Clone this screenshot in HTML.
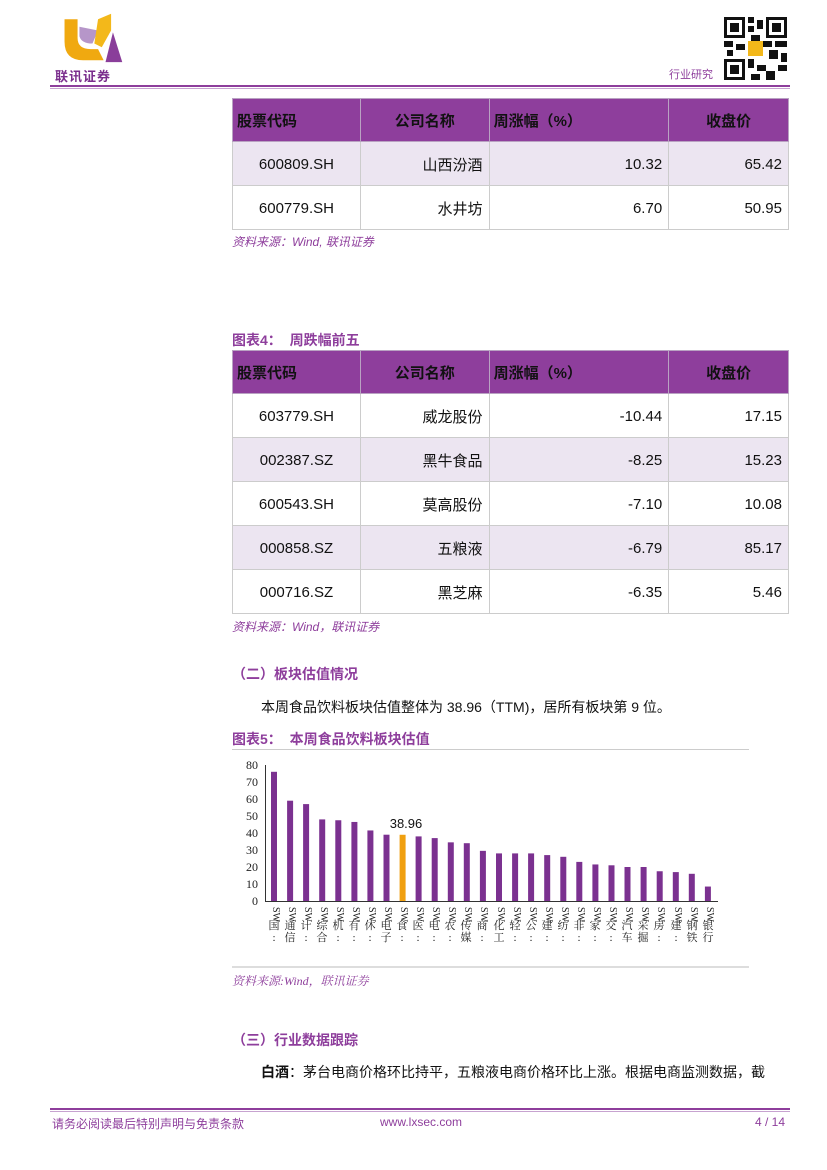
<!DOCTYPE html>
<html><head><meta charset="utf-8">
<style>
*{margin:0;padding:0;box-sizing:border-box}
body{width:827px;height:1170px;background:#fff;position:relative;font-family:"Liberation Sans","Noto Sans CJK SC",sans-serif;overflow:hidden}
.a{position:absolute}
table{position:absolute;border-collapse:collapse;left:232px;width:557px;font-size:15px;color:#111}
td{border:1px solid #ccc;height:44px;padding:2px 6px 0}
th{background:#8e3e9c;color:#111;height:43px;font-weight:bold;font-size:15px;border:1px solid #b9a2c2;padding:0 4px}
tr.l td{background:#ece5f1}
.r{text-align:right}
.c{text-align:center}
.src{font-size:12px;color:#8e3e9c;font-style:italic}
.ttl{font-size:14px;font-weight:bold;color:#8e3e9c}
.vl{position:absolute;top:906px;font-size:11px;font-family:"Liberation Serif","Noto Serif CJK SC",serif;color:#222;line-height:12px;width:12px;text-align:center}
.vl i{display:block;font-style:normal;font-size:10px;height:14px;line-height:12px;transform:rotate(90deg)}
</style></head><body>
<svg class="a" style="left:57px;top:10px" width="70" height="54" viewBox="0 0 75 58">
<path d="M8 10 L22 10 L22 30 Q22 42 36 42 L44 42 L50 54 L28 54 Q8 54 8 34 Z" fill="#f0a910"/>
<path d="M24 18 L44 22 L38 36 Q26 36 24 28 Z" fill="#b696c9"/>
<path d="M44 10 L58 4 L58 22 L48 40 L40 36 Z" fill="#f3b81a"/>
<path d="M60 24 L70 56 L52 56 Z" fill="#8a3e9a"/>
</svg>
<div class="a" style="left:55px;top:66px;font-size:13px;color:#7a2d8c;letter-spacing:1px;font-weight:bold">联讯证券</div>
<svg class="a" style="left:724px;top:17px" width="63" height="63" viewBox="0 0 21 21">
<rect width="21" height="21" fill="#fff"/>
<g fill="#111">
<rect x="0" y="0" width="7" height="7"/><rect x="14" y="0" width="7" height="7"/><rect x="0" y="14" width="7" height="7"/>
<path d="M8 0h2v2h-2zM11 1h2v3h-2zM8 3h2v2h-2zM9 6h3v2h-3zM0 8h3v2h-3zM4 9h3v2h-3zM13 8h3v2h-3zM17 8h4v2h-4zM15 11h3v3h-3zM19 12h2v3h-2zM8 14h2v3h-2zM11 16h3v2h-3zM14 18h3v3h-3zM18 16h3v2h-3zM9 19h3v2h-3zM1 11h2v2h-2z"/>
</g>
<g fill="#fff"><rect x="1" y="1" width="5" height="5"/><rect x="15" y="1" width="5" height="5"/><rect x="1" y="15" width="5" height="5"/></g>
<g fill="#111"><rect x="2" y="2" width="3" height="3"/><rect x="16" y="2" width="3" height="3"/><rect x="2" y="16" width="3" height="3"/></g>
<rect x="8" y="8" width="5" height="5" fill="#f3b81a"/>
</svg>
<div class="a" style="left:669px;top:66px;font-size:11px;color:#8e3e9c">行业研究</div>
<div class="a" style="left:50px;top:85px;width:740px;height:2px;background:#8e3e9c"></div>
<div class="a" style="left:50px;top:88px;width:740px;height:1px;background:#c7a3d0"></div>

<table style="top:98px">
<colgroup><col style="width:128px"><col style="width:129px"><col style="width:180px"><col style="width:120px"></colgroup>
<tr><th style="text-align:left">股票代码</th><th>公司名称</th><th style="text-align:left">周涨幅（%）</th><th>收盘价</th></tr>
<tr class="l"><td class="c">600809.SH</td><td class="r">山西汾酒</td><td class="r">10.32</td><td class="r">65.42</td></tr>
<tr><td class="c">600779.SH</td><td class="r">水井坊</td><td class="r">6.70</td><td class="r">50.95</td></tr>
</table>
<div class="a src" style="left:232px;top:233px">资料来源：Wind, 联讯证券</div>

<div class="a ttl" style="left:232px;top:330px">图表4：&nbsp;&nbsp;周跌幅前五</div>
<table style="top:350px">
<colgroup><col style="width:128px"><col style="width:129px"><col style="width:180px"><col style="width:120px"></colgroup>
<tr><th style="text-align:left">股票代码</th><th>公司名称</th><th style="text-align:left">周涨幅（%）</th><th>收盘价</th></tr>
<tr><td class="c">603779.SH</td><td class="r">威龙股份</td><td class="r">-10.44</td><td class="r">17.15</td></tr>
<tr class="l"><td class="c">002387.SZ</td><td class="r">黑牛食品</td><td class="r">-8.25</td><td class="r">15.23</td></tr>
<tr><td class="c">600543.SH</td><td class="r">莫高股份</td><td class="r">-7.10</td><td class="r">10.08</td></tr>
<tr class="l"><td class="c">000858.SZ</td><td class="r">五粮液</td><td class="r">-6.79</td><td class="r">85.17</td></tr>
<tr><td class="c">000716.SZ</td><td class="r">黑芝麻</td><td class="r">-6.35</td><td class="r">5.46</td></tr>
</table>
<div class="a src" style="left:232px;top:618px">资料来源：Wind，联讯证券</div>

<div class="a ttl" style="left:232px;top:664px;font-size:14px">（二）板块估值情况</div>
<div class="a" style="left:261px;top:697px;font-size:14px;color:#111">本周食品饮料板块估值整体为 38.96（TTM)，居所有板块第 9 位。</div>
<div class="a ttl" style="left:232px;top:729px">图表5：&nbsp;&nbsp;本周食品饮料板块估值</div>
<div class="a" style="left:232px;top:749px;width:517px;height:1px;background:#ccc"></div>

<svg class="a" style="left:0;top:0" width="827" height="1000">
<g font-family="Liberation Serif,serif" font-size="12" fill="#222" text-anchor="end">
<text x="258" y="769">80</text><text x="258" y="786">70</text><text x="258" y="803">60</text><text x="258" y="820">50</text><text x="258" y="837">40</text><text x="258" y="854">30</text><text x="258" y="871">20</text><text x="258" y="888">10</text><text x="258" y="905">0</text>
</g>
<line x1="265.5" y1="765" x2="265.5" y2="901" stroke="#333"/>
<line x1="265" y1="901.5" x2="718" y2="901.5" stroke="#333"/>
<g transform="translate(0,901) scale(1,-1.7)" fill="#7b3190">
<rect x="271" width="6" height="76"/><rect x="287.1" width="6" height="59"/><rect x="303.1" width="6" height="57"/><rect x="319.2" width="6" height="48"/><rect x="335.3" width="6" height="47.5"/><rect x="351.4" width="6" height="46.5"/><rect x="367.4" width="6" height="41.5"/><rect x="383.5" width="6" height="39"/><rect x="399.6" width="6" height="38.96" fill="#f0a010"/><rect x="415.6" width="6" height="38"/><rect x="431.7" width="6" height="37"/><rect x="447.8" width="6" height="34.5"/><rect x="463.8" width="6" height="34"/><rect x="479.9" width="6" height="29.5"/><rect x="496" width="6" height="28"/><rect x="512.1" width="6" height="28"/><rect x="528.1" width="6" height="28"/><rect x="544.2" width="6" height="27"/><rect x="560.3" width="6" height="26"/><rect x="576.3" width="6" height="23"/><rect x="592.4" width="6" height="21.5"/><rect x="608.5" width="6" height="21"/><rect x="624.5" width="6" height="20"/><rect x="640.6" width="6" height="20"/><rect x="656.7" width="6" height="17.5"/><rect x="672.8" width="6" height="17"/><rect x="688.8" width="6" height="16"/><rect x="704.9" width="6" height="8.5"/>
</g>
<text x="406" y="828" font-family="Liberation Sans,sans-serif" font-size="13" fill="#111" text-anchor="middle">38.96</text>
</svg>
<div class="vl" style="left:268px"><i>SW</i>国<br>:</div><div class="vl" style="left:284px"><i>SW</i>通<br>信</div><div class="vl" style="left:300px"><i>SW</i>计<br>:</div><div class="vl" style="left:316px"><i>SW</i>综<br>合</div><div class="vl" style="left:332px"><i>SW</i>机<br>:</div><div class="vl" style="left:348px"><i>SW</i>有<br>:</div><div class="vl" style="left:364px"><i>SW</i>休<br>:</div><div class="vl" style="left:380px"><i>SW</i>电<br>子</div><div class="vl" style="left:396px"><i>SW</i>食<br>:</div><div class="vl" style="left:412px"><i>SW</i>医<br>:</div><div class="vl" style="left:428px"><i>SW</i>电<br>:</div><div class="vl" style="left:444px"><i>SW</i>农<br>:</div><div class="vl" style="left:460px"><i>SW</i>传<br>媒</div><div class="vl" style="left:476px"><i>SW</i>商<br>:</div><div class="vl" style="left:493px"><i>SW</i>化<br>工</div><div class="vl" style="left:509px"><i>SW</i>轻<br>:</div><div class="vl" style="left:525px"><i>SW</i>公<br>:</div><div class="vl" style="left:541px"><i>SW</i>建<br>:</div><div class="vl" style="left:557px"><i>SW</i>纺<br>:</div><div class="vl" style="left:573px"><i>SW</i>非<br>:</div><div class="vl" style="left:589px"><i>SW</i>家<br>:</div><div class="vl" style="left:605px"><i>SW</i>交<br>:</div><div class="vl" style="left:621px"><i>SW</i>汽<br>车</div><div class="vl" style="left:637px"><i>SW</i>采<br>掘</div><div class="vl" style="left:653px"><i>SW</i>房<br>:</div><div class="vl" style="left:670px"><i>SW</i>建<br>:</div><div class="vl" style="left:686px"><i>SW</i>钢<br>铁</div><div class="vl" style="left:702px"><i>SW</i>银<br>行</div>

<div class="a" style="left:232px;top:966px;width:517px;height:2px;background:#ddd"></div>
<div class="a src" style="left:232px;top:972px;font-family:'Liberation Serif','Noto Serif CJK SC',serif">资料来源:Wind，联讯证券</div>

<div class="a ttl" style="left:232px;top:1030px">（三）行业数据跟踪</div>
<div class="a" style="left:261px;top:1062px;font-size:14px;color:#111"><b>白酒</b>：茅台电商价格环比持平，五粮液电商价格环比上涨。根据电商监测数据，截</div>

<div class="a" style="left:50px;top:1108px;width:740px;height:2px;background:#8e3e9c"></div>
<div class="a" style="left:50px;top:1111px;width:740px;height:1px;background:#c7a3d0"></div>
<div class="a" style="left:52px;top:1115px;font-size:12px;color:#8e3e9c">请务必阅读最后特别声明与免责条款</div>
<div class="a" style="left:380px;top:1115px;font-size:12px;color:#8e3e9c">www.lxsec.com</div>
<div class="a" style="left:755px;top:1115px;font-size:12px;color:#8e3e9c">4 / 14</div>
</body></html>
